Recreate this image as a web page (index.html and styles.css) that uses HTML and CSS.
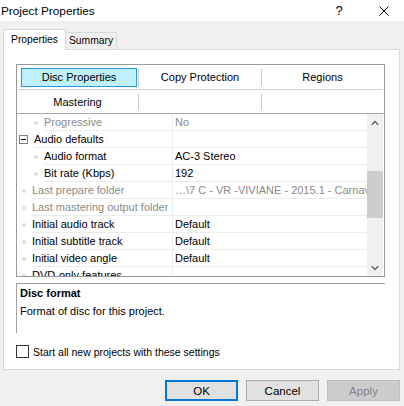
FILE: index.html
```html
<!DOCTYPE html>
<html>
<head>
<meta charset="utf-8">
<link rel="stylesheet" href="styles.css">
</head>
<body>
<div class="titlebar">
  <span class="title">Project Properties</span>
  <span class="help">?</span>
  <svg class="close" width="10" height="10" viewBox="0 0 10 10"><path d="M0.5 0.5 L9.5 9.5 M9.5 0.5 L0.5 9.5" stroke="#000" stroke-width="1" fill="none"/></svg>
</div>
<div class="main">
  <div class="tabs">
    <div class="tab active">Properties</div>
    <div class="tab">Summary</div>
  </div>
  <div class="panel">
    <div class="grid">
      <div class="toolbar">
        <div class="tbrow first">
          <div class="tbcell"><span class="tbbtn">Disc Properties</span></div>
          <div class="tbsep"></div>
          <div class="tbcell">Copy Protection</div>
          <div class="tbsep"></div>
          <div class="tbcell">Regions</div>
        </div>
        <div class="tbline"></div>
        <div class="tbrow second">
          <div class="tbcell">Mastering</div>
          <div class="tbsep"></div>
          <div class="tbcell"></div>
          <div class="tbsep"></div>
          <div class="tbcell"></div>
        </div>
      </div>
      <div class="props">
        <div class="rows">
          <div class="row dis sub"><div class="name"><i class="dot"></i><span>Progressive</span></div><div class="val">No</div></div>
          <div class="row top"><div class="name"><svg class="minus" width="9" height="9" viewBox="0 0 9 9"><rect x="0.5" y="0.5" width="8" height="8" fill="#fff" stroke="#808080"/><path d="M2 4.5 H7" stroke="#000"/></svg><span>Audio defaults</span></div><div class="val"></div></div>
          <div class="row sub"><div class="name"><i class="dot"></i><span>Audio format</span></div><div class="val">AC-3 Stereo</div></div>
          <div class="row sub"><div class="name"><i class="dot"></i><span>Bit rate (Kbps)</span></div><div class="val">192</div></div>
          <div class="row dis top"><div class="name"><i class="dot"></i><span>Last prepare folder</span></div><div class="val">…\7 C - VR -VIVIANE - 2015.1 - Carnaval 2015</div></div>
          <div class="row dis top"><div class="name"><i class="dot"></i><span>Last mastering output folder</span></div><div class="val"></div></div>
          <div class="row top"><div class="name"><i class="dot"></i><span>Initial audio track</span></div><div class="val">Default</div></div>
          <div class="row top"><div class="name"><i class="dot"></i><span>Initial subtitle track</span></div><div class="val">Default</div></div>
          <div class="row top"><div class="name"><i class="dot"></i><span>Initial video angle</span></div><div class="val">Default</div></div>
          <div class="row top"><div class="name"><i class="dot"></i><span>DVD-only features</span></div><div class="val"></div></div>
        </div>
        <div class="scrollbar">
          <div class="sbarrow"><svg width="8" height="6" viewBox="0 0 8 6"><path d="M0.8 4.8 L4 1.6 L7.2 4.8" stroke="#606060" stroke-width="1.4" fill="none"/></svg></div>
          <div class="sbtrack">
            <div class="sbthumb"></div>
          </div>
          <div class="sbarrow"><svg width="8" height="6" viewBox="0 0 8 6"><path d="M0.8 1.2 L4 4.4 L7.2 1.2" stroke="#606060" stroke-width="1.4" fill="none"/></svg></div>
        </div>
      </div>
    </div>
    <div class="desc">
      <div class="desc-title">Disc format</div>
      <div class="desc-text">Format of disc for this project.</div>
    </div>
    <label class="check"><span class="box"></span><span>Start all new projects with these settings</span></label>
  </div>
  <div class="buttons">
    <div class="btn default">OK</div>
    <div class="btn">Cancel</div>
    <div class="btn disabled">Apply</div>
  </div>
</div>
</body>
</html>
```
FILE: styles.css
```css
* { box-sizing: border-box; margin: 0; padding: 0; }
html, body { width: 404px; height: 406px; overflow: hidden; }
body {
  background: #f0f0f0;
  font-family: "Liberation Sans", Arial, sans-serif;
  font-size: 10.5px;
  color: #000;
  display: flex;
  flex-direction: column;
}
.titlebar {
  height: 21px;
  background: #fff;
  display: flex;
  align-items: center;
  padding-left: 1px;
  padding-right: 15px;
}
.title { flex: 1; font-size: 11.8px; }
.help { width: 12px; text-align: center; font-size: 13px; margin-right: 34px; }
.close { display: block; }

.main { padding: 8px 4px 0 3px; }

.tabs {
  display: flex;
  align-items: flex-end;
  height: 21px;
  margin-bottom: -1px;
  position: relative;
  z-index: 1;
}
.tab {
  border: 1px solid #d9d9d9;
  border-bottom: none;
  height: 17px;
  margin-bottom: 1px;
  margin-left: -1px;
  padding: 0 3px;
  line-height: 16px;
  width: 52px;
  text-align: center;
  font-size: 10.3px;
}
.tab.active {
  margin-left: 0;
  height: 21px;
  margin-bottom: 0;
  width: 63px;
  background: #fff;
  line-height: 19px;
}

.panel {
  background: #fff;
  border: 1px solid #d9d9d9;
  height: 321px;
  padding: 14px 14px 0 12px;
}
.grid {
  border: 1px solid #9a9a9a;
  height: 213px;
  display: flex;
  flex-direction: column;
}
.toolbar { border-bottom: 1px solid #a8a8a8; font-size: 11px; }
.tbrow { display: flex; align-items: center; }
.tbrow.first { height: 24px; }
.tbrow.second { height: 23px; }
.tbcell {
  width: 121px;
  text-align: center;
  display: flex;
  align-items: center;
  justify-content: center;
  height: 100%;
}
.tbcell:nth-child(3) { width: 122px; }
.tbsep { width: 1px; height: 17px; background: #c9c9c9; }
.tbrow.second .tbsep { height: 16px; }
.tbbtn {
  display: flex;
  align-items: center;
  justify-content: center;
  width: 116px;
  height: 19px;
  margin-left: 3px;
  background: #bff0fd;
  border: 1px solid #2f95d8;
}
.tbline { height: 1px; background: #d0d0d0; margin: 0 1px; }

.props { display: flex; height: 162px; overflow: hidden; }
.rows { flex: 1; overflow: hidden; }
.row {
  display: flex;
  height: 17px;
  font-size: 11px;
}
.name {
  width: 156px;
  display: flex;
  align-items: center;
  border-right: 1px solid #ececec;
  white-space: nowrap;
  overflow: hidden;
}
.name span {
  flex: 1;
  height: 17px;
  line-height: 16px;
  border-bottom: 1px solid #ececec;
}
.row.top .name { padding-left: 5px; }
.row.sub .name { padding-left: 17px; }
.dot {
  width: 4px;
  height: 4px;
  border-radius: 50%;
  background: #dedede;
  margin-right: 6px;
  flex: none;
}
.minus { display: block; margin-left: -3px; margin-right: 6px; flex: none; }
.val {
  flex: 1;
  padding-left: 2px;
  line-height: 16px;
  border-bottom: 1px solid #ececec;
  white-space: nowrap;
  overflow: hidden;
}
.row.dis { color: #8a8a8a; }

.scrollbar {
  width: 16px;
  margin-right: 1px;
  background: #f0f0f0;
  display: flex;
  flex-direction: column;
}
.sbarrow { height: 17px; display: flex; align-items: center; justify-content: center; }
.sbtrack { flex: 1; padding-top: 40px; }
.sbthumb { height: 47px; background: #cdcdcd; }

.desc {
  margin-top: 6px;
  height: 50px;
  border-top: 1px solid #a0a0a0;
  border-left: 1px solid #a0a0a0;
  padding: 2px 0 0 3px;
  font-size: 11px;
}
.desc-title { font-weight: bold; height: 16px; line-height: 15px; }
.desc-text { margin-top: 2px; line-height: 14px; }

.check {
  display: flex;
  align-items: center;
  margin-top: 12px;
  gap: 4px;
  font-size: 10.5px;
}
.box { width: 13px; height: 13px; border: 1px solid #333; background: #fff; }

.buttons {
  display: flex;
  justify-content: flex-end;
  gap: 8px;
  margin-top: 10px;
  padding-right: 0;
}
.btn {
  width: 73px;
  height: 21px;
  border: 1px solid #adadad;
  background: #e1e1e1;
  display: flex;
  align-items: center;
  justify-content: center;
  font-size: 11.5px;
}
.btn.default { border: 2px solid #0078d7; }
.btn.disabled { background: #cccccc; border-color: #bfbfbf; color: #838383; }
```
